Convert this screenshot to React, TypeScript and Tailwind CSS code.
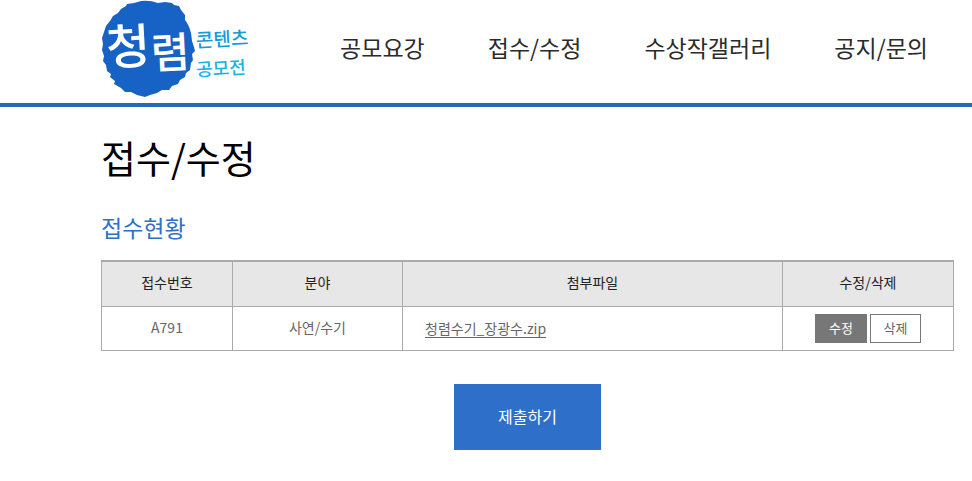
const menu = ["공모요강", "접수/수정", "수상작갤러리", "공지/문의"];

const columns = [
  { label: "접수번호", width: "w-[131px]" },
  { label: "분야", width: "w-[170px]" },
  { label: "첨부파일", width: "" },
  { label: "수정/삭제", width: "w-[171px]" },
];

const entries = [{ id: "A791", field: "사연/수기", file: "청렴수기_장광수.zip" }];

function Logo() {
  return (
    <svg
      className="block h-[103px] w-[150px] shrink-0"
      viewBox="0 0 150 103"
      role="img"
      aria-label="청렴 콘텐츠 공모전"
    >
      <path
        fill="#1762c5"
        d="M17 13L20 9L25 6L26 4L33 3L40 1Q49 0 57 3L64 2L71 3L73 5L78 6L80 10L84 15L84 20Q88 25 90 33L91 41L93 47L94 51L91 54L92 60L90 63L89 70L85 73L84 77L79 80L77 84L71 86L68 90L61 90L56 93L49 95L44 97L36 95L30 92L24 92L20 88L13 84L14 81L9 77L10 74L6 71L5 65L2 61L3 56L1 50L2 44L1 38L3 32L5 26L9 21L12 16Z"
      />
      <g fill="#fff" fontWeight="500">
        <text x="5" y="64" fontSize="48" transform="rotate(-3 28 47)">
          청
        </text>
        <text x="50" y="68" fontSize="42" transform="rotate(-3 70 55)">
          렴
        </text>
      </g>
      <text x="95" y="46" fontSize="19" fontWeight="500" fill="#159bd8" transform="rotate(-3 120 40)">
        콘텐츠
      </text>
      <text x="95" y="75" fontSize="18" fontWeight="500" fill="#20b2e4" transform="rotate(-3 120 68)">
        공모전
      </text>
    </svg>
  );
}

export default function App() {
  return (
    <div className="min-h-screen bg-white font-['Noto_Sans_CJK_KR','Noto_Sans',sans-serif] text-[#666]">
      <header className="border-b-4 border-[#2769b3] pr-11 pl-[101px]">
        <div className="flex h-[103px] items-center justify-between">
          <a href="#home">
            <Logo />
          </a>
          <nav className="flex gap-[63px] pb-2.5 text-[23px] leading-8 whitespace-nowrap text-[#2b2b2b]">
            {menu.map((item) => (
              <a key={item} href="#menu">
                {item}
              </a>
            ))}
          </nav>
        </div>
      </header>

      <main className="pt-6 pr-[18px] pb-8 pl-[101px]">
        <h1 className="text-[38px] leading-13 text-black">접수/수정</h1>
        <h2 className="mt-7 text-[23px] leading-8 text-[#2e6fc9]">접수현황</h2>

        <table className="mt-[17px] w-full table-fixed border-collapse border border-t-2 border-[#aaa] text-sm">
          <thead>
            <tr className="h-[45px] bg-[#e7e7e7] text-[#222]">
              {columns.map((column) => (
                <th
                  key={column.label}
                  scope="col"
                  className={`border border-t-2 border-[#aaa] pb-1 font-normal ${column.width}`}
                >
                  {column.label}
                </th>
              ))}
            </tr>
          </thead>
          <tbody>
            {entries.map((entry) => (
              <tr key={entry.id} className="h-11 text-center">
                <td className="border border-[#aaa] pb-0.5">{entry.id}</td>
                <td className="border border-[#aaa] pb-0.5">{entry.field}</td>
                <td className="border border-[#aaa] px-[22px] text-left">
                  <a href="#file" className="underline underline-offset-3">
                    {entry.file}
                  </a>
                </td>
                <td className="border border-[#aaa]">
                  <div className="flex justify-center gap-[3px] text-[13px]">
                    <button type="button" className="h-[29px] w-[52px] bg-[#777] text-white">
                      수정
                    </button>
                    <button type="button" className="h-[29px] w-[51px] border border-[#777] bg-white">
                      삭제
                    </button>
                  </div>
                </td>
              </tr>
            ))}
          </tbody>
        </table>

        <div className="mt-[33px] flex justify-center">
          <button type="button" className="h-[66px] w-[147px] bg-[#2d6fc9] pb-0.5 text-base text-white">
            제출하기
          </button>
        </div>
      </main>
    </div>
  );
}
